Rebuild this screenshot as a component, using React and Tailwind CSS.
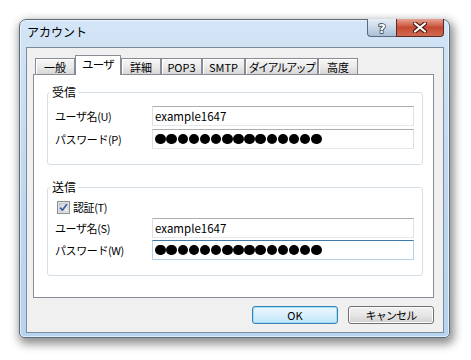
import React from "react";

const tabs = [
  { t: "一般", w: "w-[40px] tracking-[0px]" },
  { t: "ユーザ", w: "w-[46px] tracking-[-0.8px]", sel: true },
  { t: "詳細", w: "w-[40px] tracking-[0px]" },
  { t: "POP3", w: "w-[41px] tracking-[0px]" },
  { t: "SMTP", w: "w-[43px] tracking-[0px]" },
  { t: "ダイアルアップ", w: "w-[73px] tracking-[-1.6px]" },
  { t: "高度", w: "w-[40px] tracking-[0px]" },
];

function Dots() {
  return (
    <div className="flex items-center">
      {Array.from({ length: 15 }).map((_, i) => (
        <div key={i} className="w-[11.14px] h-[11px] flex items-center justify-center">
          <div className="w-[10.6px] h-[10.6px] rounded-full bg-black" />
        </div>
      ))}
    </div>
  );
}

function Field({ children, focused }) {
  return (
    <div
      className={
        "w-[262px] h-[20px] bg-white border flex items-center pl-[2px] " +
        (focused
          ? "border-[#b5cfe7] border-t-[#3d7bad]"
          : "border-[#dcdfe6] border-t-[#abadb3] border-b-[#e3e9ef]")
      }
    >
      {children}
    </div>
  );
}

function Row({ label, children, focused, className = "" }) {
  return (
    <div className={"flex items-center h-[20px] " + className}>
      <div className="w-[97px] text-[11px] leading-[14px] tracking-[-0.4px] text-black whitespace-nowrap">{label}</div>
      <Field focused={focused}>{children}</Field>
    </div>
  );
}

function Checkbox() {
  return (
    <svg width="13" height="13" viewBox="0 0 13 13">
      <defs>
        <linearGradient id="cbg" x1="0" y1="0" x2="1" y2="1">
          <stop offset="0" stopColor="#cbcfd5" />
          <stop offset="1" stopColor="#f6f6f6" />
        </linearGradient>
      </defs>
      <rect x="0.5" y="0.5" width="12" height="12" fill="#f4f4f4" stroke="#8e8f8f" />
      <rect x="2" y="2" width="9" height="9" fill="url(#cbg)" stroke="#b1b3b8" strokeWidth="0.6" />
      <path d="M3.2 6.6 L5.4 9.2 L9.8 3.2" fill="none" stroke="#3b5fa0" strokeWidth="1.7" strokeLinejoin="round" />
    </svg>
  );
}

export default function App() {
  return (
    <div className="w-[471px] h-[360px] bg-white pt-[19px] pl-[19px] [font-family:'Noto_Sans_CJK_JP','Noto_Sans',sans-serif] text-black">
      {/* window */}
      <div className="w-[431px] h-[319px] rounded-t-[7px] rounded-b-[5px] border border-[#5b6b7c] bg-gradient-to-b from-[#d3e5f6] via-[#c0d8f0] to-[#b7d3ef] shadow-[2px_4px_10px_2px_rgba(0,0,0,0.45),inset_0_0_0_1px_rgba(255,255,255,0.55)] flex flex-col pl-[6px] pr-[5px] pb-[4px]">
        {/* title bar */}
        <div className="h-[27px] flex items-start justify-between">
          <div className="pt-[4px] pl-[1px] text-[12px] leading-[16px] text-black">アカウント</div>
          <div className="flex">
            <div className="w-[29px] h-[18px] -mt-px rounded-bl-[4px] border border-t-0 border-r-0 border-[#5a6a7b] bg-gradient-to-b from-[#e6eef7] via-[#c9d8e8] to-[#a9bfd6] flex items-center justify-center">
              <svg width="14" height="16" viewBox="0 0 14 16">
                <text x="7" y="13" textAnchor="middle" fontFamily="DejaVu Sans, sans-serif" fontWeight="bold" fontSize="13" fill="#ffffff" stroke="#34404d" strokeWidth="1.6" paintOrder="stroke" strokeLinejoin="round">?</text>
              </svg>
            </div>
            <div className="w-[48px] h-[18px] -mt-px rounded-br-[4px] border border-t-0 border-[#5a2b22] bg-gradient-to-b from-[#e5a393] via-[#c64a33] to-[#d06a51] flex items-center justify-center">
              <svg width="14" height="11" viewBox="0 0 14 11">
                <path d="M2 1.5 L12 9.5 M12 1.5 L2 9.5" stroke="#4a1c14" strokeWidth="4.2" strokeLinecap="round" />
                <path d="M2 1.5 L12 9.5 M12 1.5 L2 9.5" stroke="#ffffff" strokeWidth="2.2" strokeLinecap="round" />
              </svg>
            </div>
          </div>
        </div>
        {/* client */}
        <div className="w-[418px] h-[286px] border border-[#7d8b99] bg-[#f0f0f0] flex flex-col">
          {/* tabs */}
          <div className="ml-[8px] mt-[7px] h-[19px] flex items-end">
            {tabs.map((tb) =>
              tb.sel ? (
                <div
                  key={tb.t}
                  className={tb.w + " h-[20px] -mb-px relative z-10 bg-white border border-b-0 border-[#898c95] text-[11.5px] leading-[14px] text-center pt-[1px] whitespace-nowrap"}
                >
                  {tb.t}
                </div>
              ) : (
                <div
                  key={tb.t}
                  className={tb.w + " h-[16px] border border-b-0 border-[#898c95] bg-gradient-to-b from-[#f5f5f5] via-[#ebebeb] to-[#d6d6d6] shadow-[inset_1px_1px_0_#fff] text-[11px] leading-[14px] text-center pt-[1px] whitespace-nowrap overflow-hidden"}
                >
                  {tb.t}
                </div>
              )
            )}
          </div>
          {/* panel */}
          <div className="ml-[6px] w-[401px] h-[224px] border border-[#898c95] bg-white flex flex-col">
            <fieldset className="ml-[13px] mt-[10px] w-[376px] border border-[#d5dfe5] rounded-[3px] px-[7px] pt-[7px] pb-[15px]">
              <legend className="-ml-[5px] px-[2px] text-[12px] leading-[14px]">受信</legend>
              <Row label="ユーザ名(U)">
                <span className="text-[11.5px] leading-[14px]">example1647</span>
              </Row>
              <Row label="パスワード(P)" className="mt-[3px]">
                <Dots />
              </Row>
            </fieldset>
            <fieldset className="ml-[13px] mt-[15px] w-[376px] border border-[#d5dfe5] rounded-[3px] px-[7px] pt-[5px] pb-[15px]">
              <legend className="-ml-[5px] px-[2px] text-[12px] leading-[14px]">送信</legend>
              <div className="h-[16px] flex items-center gap-[3px] pl-[2px]">
                <Checkbox />
                <span className="text-[11px] leading-[14px] tracking-[-0.4px]">認証(T)</span>
              </div>
              <Row label="ユーザ名(S)" className="mt-[3px]">
                <span className="text-[11.5px] leading-[14px]">example1647</span>
              </Row>
              <Row label="パスワード(W)" className="mt-[2px]" focused>
                <Dots />
              </Row>
            </fieldset>
          </div>
          {/* buttons */}
          <div className="ml-[6px] w-[401px] mt-[8px] flex justify-end gap-[10px]">
            <div className="w-[86px] h-[18px] rounded-[3px] border border-[#3c7fb1] bg-gradient-to-b from-[#eaf6fd] via-[#d9effc] to-[#bee6fd] shadow-[inset_0_0_0_1px_#9ee0f8] flex items-center justify-center text-[11px] leading-[14px]">
              OK
            </div>
            <div className="w-[86px] h-[18px] rounded-[3px] border border-[#707070] bg-gradient-to-b from-[#f2f2f2] via-[#e6e6e6] to-[#d0d0d0] shadow-[inset_0_0_0_1px_#fcfcfc] flex items-center justify-center text-[11px] leading-[14px] tracking-[-0.8px]">
              キャンセル
            </div>
          </div>
        </div>
      </div>
    </div>
  );
}
